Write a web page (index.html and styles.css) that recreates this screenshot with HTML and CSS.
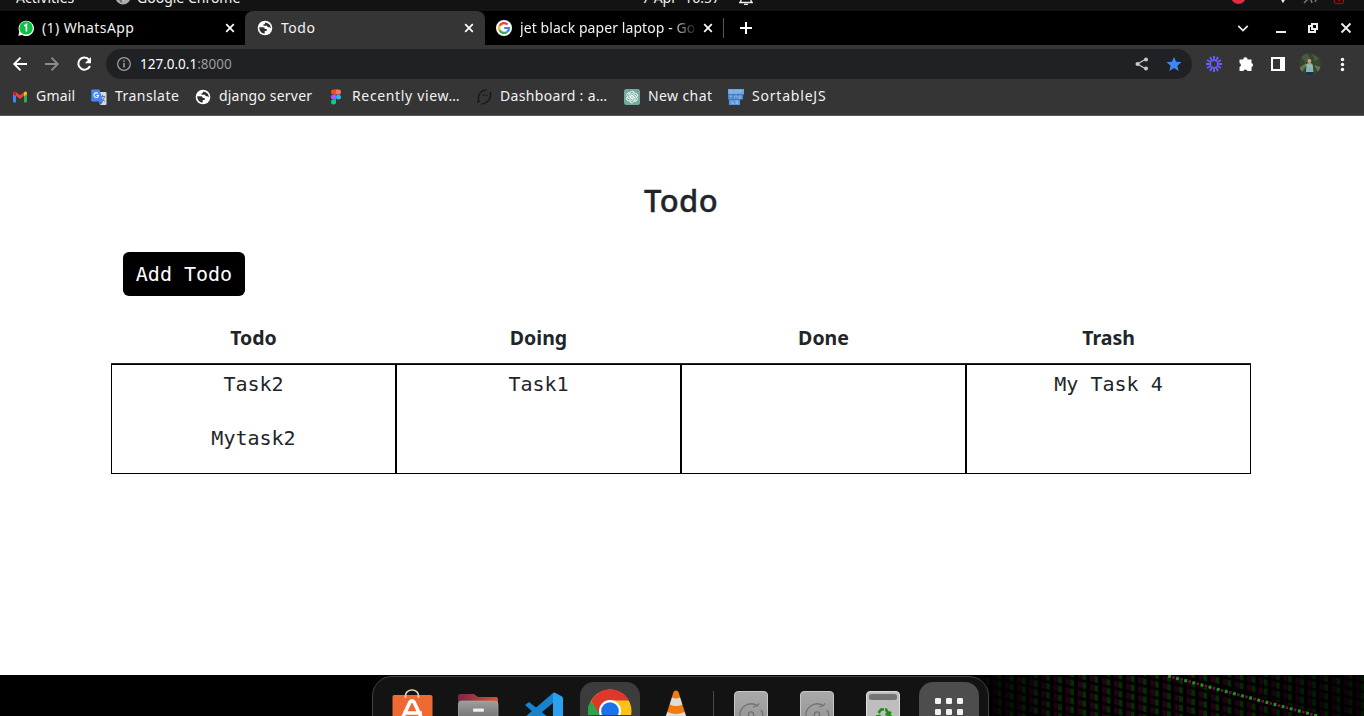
FILE: index.html
```html
<!DOCTYPE html>
<html lang="en">
<head>
<meta charset="utf-8">
<title>Todo</title>
<link rel="stylesheet" href="styles.css">
</head>
<body>
<svg class="defs" width="0" height="0">
  <defs>
    <symbol id="globe" viewBox="0 0 16 16">
      <circle cx="8" cy="8" r="7.300" fill="#fff"/>
      <path d="M2.300 7.300h3.600c1.300 0 1.900.7 1.900 1.700h1.900v1.900H7.700v2.700C4.500 13.600 2.100 10.900 2.300 7.300zM7.900 2.800v1.500H6.500v1.500h3.600c.3 1.300 1.200 1.700 2.500 1.400l1.300 1C13.700 4.900 11.200 2.600 7.900 2.800z" fill="#303030"/>
    </symbol>
    <symbol id="close" viewBox="0 0 10 10"><path d="M1.200 1.200l7.600 7.600M8.800 1.200L1.200 8.800" stroke="#fff" stroke-width="1.700"/></symbol>
    <symbol id="disk" viewBox="0 0 34 26">
      <defs><linearGradient id="dg" x2="0" y2="1"><stop stop-color="#a9a9a9"/><stop offset="1" stop-color="#8d8d8d"/></linearGradient></defs>
      <rect x=".5" y=".5" width="33" height="44" rx="3.500" fill="url(#dg)" stroke="#c6c6c6"/>
      <path d="M6.500 28C3.500 17 14 9.500 23.500 14.500L25 12.500M23.500 14.500L19 16M27 19q3 4 1 9" fill="none" stroke="#727272" stroke-width="1.300"/>
      <circle cx="17" cy="23.500" r="2.600" fill="none" stroke="#727272" stroke-width="1.300"/>
    </symbol>
  </defs>
</svg>

<header class="sysbar">
  <span class="sys-activities">Activities</span>
  <svg class="sys-chrome" width="16" height="16" viewBox="0 0 16 16"><circle cx="8" cy="8" r="7.500" fill="#aaa"/><path d="M1 5l5 9 2-3z" fill="#666"/><circle cx="8" cy="8" r="3.200" fill="#666" stroke="#ddd"/></svg>
  <span class="sys-app">Google Chrome</span>
  <span class="sys-clock">7 Apr&nbsp; 16:57</span>
  <svg class="sys-bell" width="14" height="11" viewBox="0 0 14 11"><path d="M2 0v1L.8 2.500h12.400L12 1V0M5 4.300h4" fill="none" stroke="#eee" stroke-width="1.300"/></svg>
  <svg class="sys-tray" width="120" height="11" viewBox="0 0 120 11"><circle cx="7.500" cy="-3.200" r="7.300" fill="#e5293e"/><path d="M49-2h6l-3 5.200z" fill="#eee"/><path d="M73 3l6-6 2 6M84 2l2-4" stroke="#777" stroke-width="1.500" fill="none"/><rect x="103.500" y="-5" width="9" height="8.400" rx="1.500" fill="#250000" stroke="#b50d0d"/><path d="M108-2v4" stroke="#e11"/></svg>
</header>

<nav class="tabs">
  <div class="tab tab-first">
    <svg width="16" height="16" viewBox="0 0 16 16"><path d="M.3 15.700l1-4A7.700 7.700 0 1 1 4.300 15z" fill="#fff"/><circle cx="8.100" cy="7.900" r="6.700" fill="#0cc143"/><path d="M6.200 6l2.200-1.500V11.500" stroke="#fff" stroke-width="1.600" fill="none"/></svg>
    <span class="tab-title t-whatsapp">(1) WhatsApp</span>
    <svg class="x" width="10" height="10"><use href="#close"/></svg>
  </div>
  <div class="tab tab-active">
    <svg width="16" height="16"><use href="#globe"/></svg>
    <span class="tab-title t-todo">Todo</span>
    <svg class="x" width="10" height="10"><use href="#close"/></svg>
  </div>
  <div class="tab tab-last">
    <svg width="16" height="16" viewBox="0 0 16 16"><circle cx="8" cy="8" r="8" fill="#fff"/><g fill="none" stroke-width="2.200"><path d="M3.600 5.700A5 5 0 0 1 11.500 4.500" stroke="#ea4335"/><path d="M3.600 5.600a5 5 0 0 0 0 4.800" stroke="#fbbc05"/><path d="M3.600 10.300a5 5 0 0 0 7.600 1.500" stroke="#34a853"/><path d="M8.200 8h4.800q0 2.500-1.800 3.900" stroke="#4285f4"/></g></svg>
    <span class="tab-title t-google">jet black paper laptop - Go</span>
    <svg class="x" width="10" height="10"><use href="#close"/></svg>
  </div>
  <span class="tab-sep"></span>
  <svg class="new-tab" width="12" height="12" viewBox="0 0 12 12"><path d="M6 0v12M0 6h12" stroke="#fff" stroke-width="2"/></svg>
  <svg class="window-buttons" width="116" height="16" viewBox="0 0 116 16"><path d="M2.300 5.800L7 10.500l4.700-4.700" fill="none" stroke="#eee" stroke-width="1.700"/><path d="M40 12h10" stroke="#eee" stroke-width="2"/><path d="M76 4h5v5h-5zM76 6h-3v6h6v-3" fill="none" stroke="#eee" stroke-width="2"/><path d="M105.500 3.500l9 9M114.500 3.500l-9 9" stroke="#eee" stroke-width="1.900"/></svg>
</nav>

<div class="toolbar">
  <svg class="nav-buttons" width="94" height="20" viewBox="0 0 94 20"><g fill="none" stroke-width="1.900"><path d="M27 10H14.500M20.500 3.700L14.200 10l6.300 6.300" stroke="#fff"/><path d="M45 10h12.500M51.500 3.700l6.300 6.300-6.300 6.300" stroke="#8b8b8b"/><path d="M89.200 5.800A6.100 6.100 0 1 0 90 12" stroke="#fff" stroke-width="2"/></g><path d="M91 3v6.200h-6.200z" fill="#fff"/></svg>
  <div class="omnibox">
    <svg width="16" height="16" viewBox="0 0 16 16"><circle cx="8" cy="8" r="6.300" fill="none" stroke="#9aa0a6" stroke-width="1.300"/><path d="M8 7v4.500M8 4.200v1.600" stroke="#9aa0a6" stroke-width="1.600"/></svg>
    <span class="url">127.0.0.1<span class="port">:8000</span></span>
    <svg class="share" width="14" height="14" viewBox="0 0 14 14"><path d="M11 2L2.500 7 11 12" fill="none" stroke="#c8c8c8" stroke-width="1.300"/><g fill="#c8c8c8"><circle cx="11" cy="2.500" r="2"/><circle cx="2.500" cy="7" r="2"/><circle cx="11" cy="11.500" r="2"/></g></svg>
    <svg class="star" width="16" height="16" viewBox="0 0 16 16"><path d="M8 .7l2.100 5 5.400.4-4.100 3.600 1.200 5.200L8 12.100l-4.600 2.800 1.200-5.200L.5 6.100l5.400-.4z" fill="#4285f4"/></svg>
  </div>
  <svg class="extensions" width="150" height="24" viewBox="0 0 150 24">
    <g stroke="#6a5eff" stroke-width="1.900"><path d="M14 4v5M14 15v5M6 12h5M17 12h5"/><path d="M14 4v5M14 15v5M6 12h5M17 12h5" transform="rotate(30 14 12)"/><path d="M14 4v5M14 15v5M6 12h5M17 12h5" transform="rotate(60 14 12)"/></g>
    <path d="M39.500 7.500h3.700a2.200 2.200 0 0 1 4.400 0H51.500v3.500a2.200 2.200 0 0 1 0 4.200V19h-4a2.200 2.200 0 0 0-4.200 0h-3.800v-4a2.100 2.100 0 0 0 0-4z" fill="#fff"/>
    <path d="M72 6h12v12H72z" fill="none" stroke="#fff" stroke-width="2"/><path d="M80 6h5v12h-5z" fill="#fff"/>
    <clipPath id="av"><circle cx="110" cy="12" r="11"/></clipPath><g clip-path="url(#av)"><path d="M99 1h22v22H99z" fill="#34452d"/><path d="M100 4l7-3 3 5-4 5zM112 2l7 4-4 4z" fill="#4b5940"/><path d="M99 16l7-5v4l-5 6zM114 13l7 2-2 7z" fill="#697057"/><path d="M106.500 12q3-2 6 0l1 8h-7.500z" fill="#78bdb4"/><circle cx="109.400" cy="9" r="2" fill="#ce9f83"/><path d="M106 13l7 2" stroke="#d9a68c" stroke-width="1.500"/><path d="M106 20h7v4h-7z" fill="#232b52"/></g>
    <g fill="#fff"><circle cx="142.500" cy="7.500" r="1.700"/><circle cx="142.500" cy="12.500" r="1.700"/><circle cx="142.500" cy="17.500" r="1.700"/></g>
  </svg>
</div>

<div class="bookmarks">
  <div class="bm bm-gmail"><svg width="16" height="16" viewBox="0 0 16 16"><path d="M1 4h3v9.500H2Q1 13.500 1 12.500z" fill="#4285f4"/><path d="M12 4h3v8.500q0 1-1 1h-2z" fill="#34a853"/><path d="M1 5V3.500Q2 1.800 3.700 3L8 6.300 12.300 3v3.500L8 9.900 4 6.800z" fill="#ea4335"/><path d="M12 3.200q2.200-1.600 3 .5V5l-3 2.500z" fill="#fbbc05"/><path d="M1 3.500Q2 2 4 3.200v4L1 5z" fill="#c5221f"/></svg><span>Gmail</span></div>
  <div class="bm bm-translate"><svg width="16" height="16" viewBox="0 0 16 16"><path d="M6 3h8.500q1 0 1 1v11q0 1-1 1H9z" fill="#d5d8dc"/><path d="M9 7.500h5M11.500 6v1.500M13.500 8q-1 3-3.500 4.500M10 8.500q1.500 3 4 4" fill="none" stroke="#697888"/><path d="M1 .5h7.500L12 12.500H1q-.7 0-.7-1V1.300Q.3.500 1 .5z" fill="#4688f4"/><path d="M8 12.500h4L9.500 16z" fill="#3367d6"/><path d="M7 4.600A2.300 2.300 0 1 0 7.600 6.500H5.500" fill="none" stroke="#fff" stroke-width="1.100"/></svg><span>Translate</span></div>
  <div class="bm bm-django"><svg width="16" height="16"><use href="#globe"/></svg><span>django server</span></div>
  <div class="bm bm-figma"><svg width="16" height="16" viewBox="0 0 16 16"><path d="M8 .5H5.500a2.500 2.500 0 0 0 0 5H8z" fill="#f24e1e"/><path d="M8 .5h2.500a2.500 2.500 0 0 1 0 5H8z" fill="#ff7262"/><path d="M8 5.500H5.500a2.500 2.500 0 0 0 0 5H8z" fill="#a259ff"/><circle cx="10.500" cy="8" r="2.500" fill="#1abcfe"/><path d="M8 10.500H5.500A2.500 2.500 0 1 0 8 13z" fill="#0acf83"/></svg><span>Recently view…</span></div>
  <div class="bm bm-dash"><svg width="16" height="16" viewBox="0 0 16 16"><path d="M10.500.8Q6 .8 3.500 5 1.500 9 3 12.500L1 13M14.300 3Q15.500 9 11 13q-2.500 2-5.500 2" fill="none" stroke="#151515" stroke-width="1.300"/><circle cx="7.500" cy="6" r=".8" fill="#111"/><circle cx="10.500" cy="6.500" r=".8" fill="#111"/></svg><span>Dashboard : a…</span></div>
  <div class="bm bm-chat"><svg width="16" height="16" viewBox="0 0 16 16"><rect width="16" height="16" rx="2.500" fill="#74aa9c"/><g fill="none" stroke="#fff" stroke-width=".85"><path id="k" d="M6 5V4.300a2.300 2.300 0 0 1 4.300-1l-3.500 2v4"/><use href="#k" transform="rotate(60 8 8)"/><use href="#k" transform="rotate(120 8 8)"/><use href="#k" transform="rotate(180 8 8)"/><use href="#k" transform="rotate(240 8 8)"/><use href="#k" transform="rotate(300 8 8)"/></g></svg><span>New chat</span></div>
  <div class="bm bm-sort"><svg width="16" height="16" viewBox="0 0 16 16"><path d="M0 0h16v5.500H0z" fill="#62a8f5"/><path d="M0 5.500h15v5H0z" fill="#4e88ca"/><path d="M1 10.500h11V16H1z" fill="#5b98dc"/><path d="M2 1.500h2.500M2 1.500v1.200h2.500V4H2M6.500 1.500H9V4H6.500zM11 4V1.500h2.500v1.300H11M1.500 7H4M2.800 7v2.500M6.500 9.500V7H9v2.500M11 7h2v2.500h-2zM4 12v2.500h2M8 12h2.500M8 13.200h2M8 12v2.500h2.500" fill="none" stroke="#96c4f5" stroke-width=".7"/></svg><span>SortableJS</span></div>
</div>

<main class="page">
  <h2>Todo</h2>
  <button class="add">Add Todo</button>
  <div class="board">
    <section class="col"><h5>Todo</h5><div class="list"><p>Task2</p><p>Mytask2</p></div></section>
    <section class="col"><h5>Doing</h5><div class="list"><p>Task1</p></div></section>
    <section class="col"><h5>Done</h5><div class="list"></div></section>
    <section class="col"><h5>Trash</h5><div class="list"><p>My Task 4</p></div></section>
  </div>
</main>

<footer class="desktop">
  <svg class="wallpaper" width="384" height="41" viewBox="0 0 384 41">
    <defs>
      <pattern id="px" width="12.100" height="9" patternUnits="userSpaceOnUse" patternTransform="skewY(13)"><rect x="1" y="1.500" width="4" height="6" fill="#35001f"/><rect x="5.500" y="1.500" width="3.800" height="6.300" fill="#073d05"/></pattern>
      <linearGradient id="fade"><stop stop-color="#000" stop-opacity=".8"/><stop offset=".25" stop-color="#000" stop-opacity=".25"/><stop offset=".6" stop-color="#000" stop-opacity=".25"/><stop offset="1" stop-color="#000" stop-opacity=".7"/></linearGradient>
    </defs>
    <rect width="384" height="41" fill="url(#px)"/><rect width="384" height="41" fill="url(#fade)"/>
    <path d="M184-2L340 42" stroke="#000" stroke-width="6"/>
    <path d="M188 1L338 41" stroke="#1f9412" stroke-width="3.200" stroke-dasharray="3 5.400"/>
    <path d="M192.200 2.100L338 41" stroke="#75104e" stroke-width="2.800" stroke-dasharray="2.500 5.900"/>
  </svg>
  <div class="dock">
    <div class="slot"><svg width="42" height="28" viewBox="0 0 42 28"><path d="M3 6q-1.500 0-1.500 2v30h40V8q0-2-2-2z" fill="#ef6a32"/><path d="M14.500 9V6.500a6.500 5.500 0 0 1 13 0V9" fill="none" stroke="#ead7b5" stroke-width="1.600"/><path d="M11 30l8-17q2-2 4 0l8 17M12 24h19" fill="none" stroke="#fff" stroke-width="3.600"/></svg></div>
    <div class="slot"><svg width="42" height="28" viewBox="0 0 42 28"><defs><linearGradient id="fg"><stop stop-color="#762846"/><stop offset="1" stop-color="#d75431"/></linearGradient><linearGradient id="gg" x2="0" y2="1"><stop stop-color="#9d9d9d"/><stop offset="1" stop-color="#777"/></linearGradient></defs><path d="M1 28V7q0-2 2-2h14l4 3h18q2 0 2 3v17z" fill="url(#fg)"/><path d="M1.500 28V15q0-3 3-3h33q3.500 0 3.500 3v13z" fill="url(#gg)" stroke="#aaa" stroke-width=".7"/><rect x="16" y="19.500" width="11" height="3.200" rx="1" fill="#eee"/></svg></div>
    <div class="slot"><svg width="42" height="28" viewBox="0 0 42 28"><path d="M2 16l4-3 24 19h-10zM30 4l9 5v25h-9V14L13 28H2z" fill="#1684cb"/><path d="M30 4q1-.8 2-.3l7 3.800q1 .5 1 2V30H30z" fill="#2ba1ed"/></svg></div>
    <div class="slot slot-lit"><svg width="44" height="28" viewBox="0 0 44 28"><circle cx="22" cy="24" r="21.500" fill="#fbc116"/><path d="M3.200 14A21.500 21.500 0 0 1 40.900 13.500H22L12 29z" fill="#dd382b"/><path d="M3 13.700L12 28v12H0V20z" fill="#2ba24c"/><circle cx="22" cy="24" r="11" fill="#fff"/><circle cx="22" cy="24" r="8.800" fill="#1a73e8"/></svg></div>
    <div class="slot"><svg width="42" height="28" viewBox="0 0 42 28"><path d="M18.500 3q.5-1.500 2.500-1.500T23.500 3L32 30H10z" fill="#f07c10"/><path d="M17 8.500q4 2 8 0l2.300 7q-6 3-12.600 0z" fill="#ddd"/><path d="M12.400 23q8.600 4 17.200 0l2 6H10z" fill="#ddd"/></svg></div>
    <span class="dock-sep"></span>
    <div class="slot"><svg width="34" height="26"><use href="#disk"/></svg></div>
    <div class="slot"><svg width="34" height="26"><use href="#disk"/></svg></div>
    <div class="slot"><svg width="34" height="26" viewBox="0 0 34 26"><rect x=".5" y=".5" width="33" height="44" rx="3.500" fill="#bebebe" stroke="#dedede"/><rect x="3" y="3" width="28" height="6" rx="2.500" fill="#747474"/><path d="M12.500 22l2.500-3.500h3M19 18.500h1l2.500 4M24.500 20.500L23 24l-3.500-1M10 25.500l3.500-.5 1 3M23 26l3-1" fill="none" stroke="#238a18" stroke-width="2.600"/></svg></div>
    <div class="slot slot-apps"><svg width="28" height="18" viewBox="0 0 28 18"><g fill="#f2f2f2"><rect width="6" height="6" rx="1.200"/><rect x="11" width="6" height="6" rx="1.200"/><rect x="22" width="6" height="6" rx="1.200"/><rect y="11" width="6" height="6" rx="1.200"/><rect x="11" y="11" width="6" height="6" rx="1.200"/><rect x="22" y="11" width="6" height="6" rx="1.200"/></g></svg></div>
  </div>
</footer>
</body>
</html>
```
FILE: styles.css
```css
* { box-sizing: border-box; }
body { margin: 0; width: 1364px; height: 716px; overflow: hidden; background: #fff; font-family: "Noto Sans", "Open Sans", sans-serif; font-size: 14px; color: #f2f2f2; }
svg { display: block; flex: none; overflow: hidden; }
.defs { position: absolute; }

.sysbar { height: 11px; background: #131313; display: flex; align-items: flex-start; overflow: hidden; padding-left: 16px; white-space: nowrap; line-height: 20px; }
.sysbar span { margin-top: -12px; flex: none; }
.sys-activities { width: 99px; }
.sys-chrome { margin: -11px 6px 0 0; }
.sys-app { width: 505px; }
.sys-clock { width: 97px; }
.sys-tray { margin-left: 478px; }

.tabs { height: 34px; background: #000; display: flex; align-items: center; }
.tab { height: 34px; display: flex; align-items: center; gap: 8px; white-space: nowrap; }
.tab-title { flex: 1; overflow: hidden; line-height: 22px; }
.tab-first { width: 245px; padding: 0 10px 0 18px; }
.tab-active { width: 240px; padding: 0 11px 0 12px; background: #353535; border-radius: 8px 8px 0 0; }
.tab-last { width: 238px; padding: 0 10px 0 11px; }
.t-whatsapp { letter-spacing: .4px; }
.t-todo { letter-spacing: .5px; }
.t-google { letter-spacing: .08px; -webkit-mask-image: linear-gradient(90deg, #000 150px, transparent 178px); mask-image: linear-gradient(90deg, #000 150px, transparent 178px); }
.tab-sep { width: 1px; height: 20px; background: #555; }
.new-tab { margin-left: 16px; }
.window-buttons { margin-left: 484px; }

.toolbar { height: 38px; background: #353535; display: flex; align-items: center; }
.nav-buttons { margin-right: 12px; }
.omnibox { width: 1086px; height: 30px; border-radius: 15px; background: #202124; display: flex; align-items: center; padding: 0 10px; }
.url { margin-left: 8px; flex: 1; color: #fff; font-size: 13.5px; }
.port { color: #9a9a9a; }
.share { margin-right: 17px; }
.extensions { margin-left: 8px; }

.bookmarks { height: 33px; background: #353535; border-bottom: 1px solid #5a5a5a; display: flex; padding: 0 0 5px 12px; }
.bm { display: flex; align-items: center; gap: 8px; white-space: nowrap; }
.bm span { line-height: 20px; margin-top: -1px; }
.bm-gmail { width: 79px; letter-spacing: .2px; }
.bm-translate { width: 104px; letter-spacing: .45px; }
.bm-django { width: 133px; letter-spacing: .2px; }
.bm-figma, .bm-dash { width: 148px; }
.bm-figma { letter-spacing: .65px; }
.bm-dash { letter-spacing: .35px; }
.bm-chat { width: 104px; letter-spacing: .4px; }
.bm-sort { letter-spacing: .8px; }

.page { height: 559px; padding: 63px 113px 0 111px; color: #212529; }
h2 { margin: 0; height: 42px; line-height: 42px; font-size: 31px; font-weight: 500; letter-spacing: .4px; text-align: center; -webkit-text-stroke: .35px #212529; }
.add { display: block; width: 122px; height: 44px; margin: 31px 0 0 12px; padding: 0; border: 0; border-radius: 6px; background: #000; color: #fff; font: 20px/44px "DejaVu Sans Mono", monospace; }
.board { display: grid; grid-template-columns: repeat(4, 285px); padding-top: 24px; text-align: center; }
h5 { margin: 0; height: 44px; line-height: 35px; font-size: 19.5px; font-weight: 700; border-bottom: 1px solid #212529; }
.list { height: 110px; border: 1px solid #000; }
.list p { margin: 0; padding-top: 4px; height: 54px; font: 20px/30px "DejaVu Sans Mono", monospace; }

.desktop { position: relative; height: 41px; background: #000; overflow: hidden; }
.wallpaper { margin-left: auto; }
.dock { position: absolute; left: 372px; top: 1px; width: 617px; height: 66px; border: 1px solid #444; border-radius: 20px; background: #131313; display: flex; gap: 6px; padding: 5px 9px; }
.slot { flex: none; width: 60px; height: 60px; display: flex; justify-content: center; padding-top: 7px; border-radius: 14px; }
.slot:nth-child(n+7) { padding-top: 9px; }
.slot-lit { background: #3c3c3c; padding-top: 5px; }
.slot.slot-apps { background: #4d4d4d; padding-top: 16px; }
.dock-sep { width: 1px; height: 60px; margin: 9px 1px 0; background: #4b4b4b; flex: none; }
```
